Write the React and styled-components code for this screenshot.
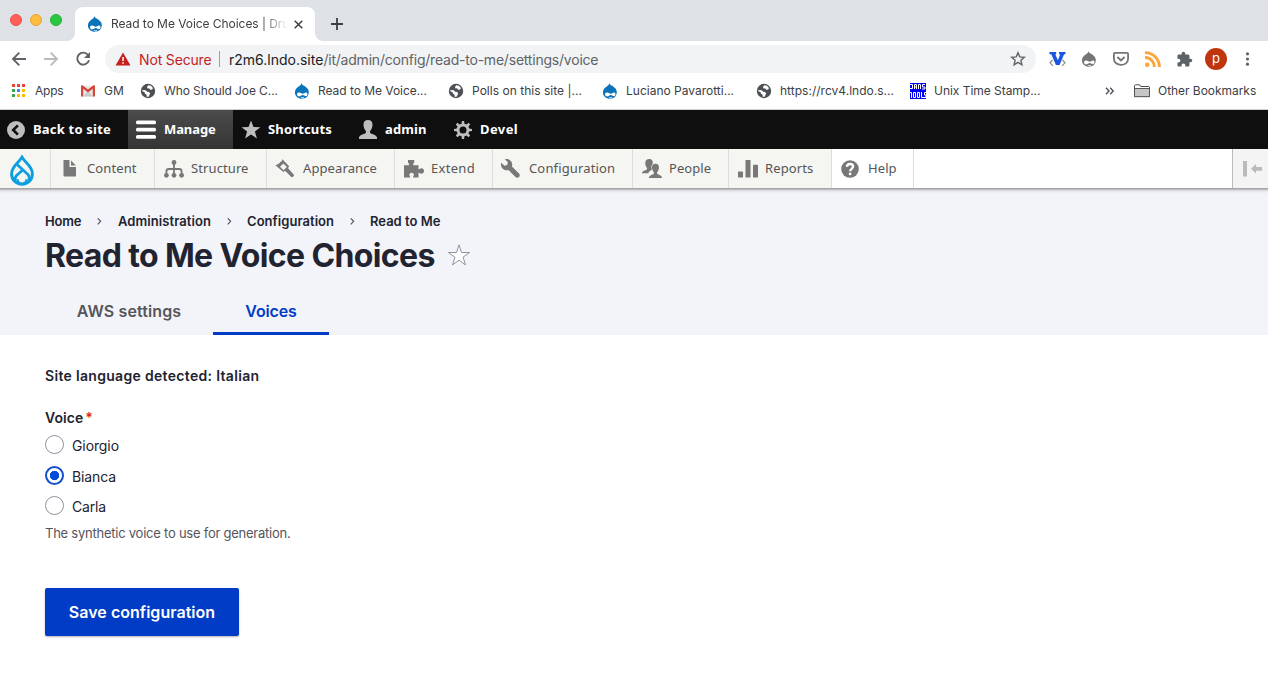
import React from "react";
import styled, { createGlobalStyle } from "styled-components";

const Global = createGlobalStyle`
  *, *::before, *::after { box-sizing: border-box; }
  html, body { margin: 0; background: #fff; overflow: hidden; }
  svg { display: block; flex: none; }
`;

const ui = `Inter, Roboto, "Liberation Sans", sans-serif`;
const humanist = `"Noto Sans", "Open Sans", "DejaVu Sans", sans-serif`;

const Page = styled.div`
  width: 1268px;
  height: 676px;
  overflow: hidden;
  font-family: ${ui};
  background: #fff;
  color: #222330;
`;

const Label = styled.span`
  letter-spacing: ${(p) => p.$ls || 0}px;
  white-space: nowrap;
`;

/* ---------- browser window ---------- */

const TabStrip = styled.div`
  height: 41px;
  background: #dee1e6;
  display: flex;
  align-items: flex-end;
`;

const Lights = styled.div`
  display: flex;
  gap: 8px;
  width: 67px;
  padding-left: 10px;
  margin-bottom: 15px;
`;

const Light = styled.span`
  width: 12px;
  height: 12px;
  border-radius: 50%;
  background: ${(p) => p.$fill};
  border: 1px solid ${(p) => p.$edge};
`;

const TabFoot = styled.span`
  width: 8px;
  height: 8px;
  background: radial-gradient(circle at ${(p) => (p.$left ? "0 0" : "100% 0")}, transparent 7.6px, #fff 8.1px);
`;

const BrowserTab = styled.div`
  width: 240px;
  height: 34px;
  border-radius: 8px 8px 0 0;
  background: #fff;
  display: flex;
  align-items: center;
  padding: 0 12px;
  font-size: 12px;
  color: #3c4043;
`;

const TabTitle = styled.div`
  width: 177px;
  margin-left: 8px;
  margin-right: 6px;
  white-space: nowrap;
  line-height: 18px;
  mask-image: linear-gradient(90deg, #000 150px, transparent 177px);
`;

const NewTab = styled.div`
  height: 34px;
  padding-left: 8px;
  display: flex;
  align-items: center;
`;

const NavRow = styled.div`
  height: 36px;
  display: flex;
  align-items: center;
  padding: 0 11px;
`;

const NavIcons = styled.div`
  display: flex;
  align-items: center;
  gap: 16px;
  width: 94px;
`;

const Omnibox = styled.div`
  width: 931px;
  height: 28px;
  border-radius: 14px;
  background: #f1f3f4;
  display: flex;
  align-items: center;
  padding: 0 10px;
  font-size: 14px;
  color: #5f6368;
`;

const NotSecure = styled.span`
  color: #c5221f;
  margin-left: 8px;
  width: 80px;
`;

const OmniRule = styled.span`
  width: 1px;
  height: 16px;
  background: #9aa0a6;
  margin-right: 9px;
`;

const Host = styled(Label)`
  color: #202124;
`;

const Address = styled.div`
  flex: 1;
  white-space: nowrap;
`;

const Extensions = styled.div`
  display: flex;
  align-items: center;
  gap: 15px;
  margin-left: 13px;
`;

const Avatar = styled.span`
  width: 22px;
  height: 22px;
  margin: 0 -3px;
  border-radius: 50%;
  background: #bf360c;
  color: #fff;
  font-size: 13px;
  line-height: 20px;
  text-align: center;
`;

const BookmarkBar = styled.div`
  height: 33px;
  padding: 0 11px 5px 11px;
  display: flex;
  align-items: center;
  border-bottom: 1px solid #dadce0;
  font-size: 12px;
  color: #3c4043;
`;

const Bookmark = styled.div`
  width: ${(p) => p.$w}px;
  flex: none;
  height: 26px;
  display: flex;
  align-items: center;
`;

const BookmarkIcon = styled.span`
  width: ${(p) => p.$w || 24}px;
  flex: none;
  display: flex;
`;

const BarRule = styled.span`
  width: 1px;
  height: 16px;
  background: #c8cacd;
  margin: 0 10px 0 9px;
`;

/* ---------- admin toolbar ---------- */

const AdminBar = styled.div`
  height: 40px;
  margin-top: -1px;
  border-top: 1px solid #cfd0d2;
  background: #0f0f0f;
  display: flex;
  font: 700 13px/18px ${humanist};
  color: #fff;
`;

const AdminItem = styled.div`
  width: ${(p) => p.$w}px;
  padding-left: ${(p) => p.$pad}px;
  display: flex;
  align-items: center;
  background: ${(p) => (p.$active ? "linear-gradient(#4c4c4c, #343434)" : "none")};
`;

const BarText = styled(Label)`
  padding-bottom: 2px;
`;

const IconSlot = styled.span`
  width: ${(p) => p.$w}px;
  flex: none;
  display: flex;
`;

const Tray = styled.div`
  height: 39px;
  background: #fff;
  display: flex;
  font: 400 13px/18px ${humanist};
  color: #565656;
  position: relative;
  box-shadow: 0 1px 0 #a5a5a8, 0 2px 1px #bcbdc1, 0 3px 3px rgba(0, 0, 0, 0.12);
`;

const TrayItem = styled.div`
  width: ${(p) => p.$w}px;
  border-right: 1px solid #ddd;
  background: ${(p) => (p.$plain ? "#fff" : "#f5f5f2")};
  padding-left: ${(p) => p.$pad}px;
  display: flex;
  align-items: center;
`;

const LogoItem = styled(TrayItem)`
  align-items: flex-end;
  padding-bottom: 2px;
`;

const Orient = styled.div`
  width: 36px;
  margin-left: auto;
  border-left: 1px solid #bbb;
  background: #f4f4f4;
  padding-left: 10px;
  display: flex;
  align-items: center;
`;

/* ---------- content ---------- */

const Header = styled.header`
  height: 147px;
  background: #f3f4f9;
  padding: 25px 45px 0;
  display: flex;
  flex-direction: column;
`;

const Breadcrumb = styled.nav`
  display: flex;
  align-items: center;
  height: 16px;
  font-size: 13px;
  font-weight: 600;
`;

const Crumb = styled.span`
  width: ${(p) => p.$w}px;
`;

const CrumbArrow = styled.span`
  width: ${(p) => p.$w}px;
  display: flex;
`;

const TitleRow = styled.div`
  display: flex;
  align-items: center;
  height: 40px;
  margin-top: 6px;
`;

const Title = styled.h1`
  margin: 0 12px 0 0;
  padding-top: 1px;
  font-size: 32px;
  line-height: 40px;
  font-weight: 700;
  letter-spacing: -0.63px;
  width: 390px;
  white-space: nowrap;
`;

const Tabs = styled.div`
  display: flex;
  margin-top: auto;
  height: 48px;
  font-size: 16px;
  font-weight: 600;
`;

const PageTab = styled.div`
  width: ${(p) => p.$w}px;
  text-align: center;
  line-height: 48px;
  color: ${(p) => (p.$active ? "#003cc5" : "#55565b")};
  box-shadow: ${(p) => (p.$active ? "inset 0 -3px 0 #003cc5" : "none")};
`;

const Form = styled.main`
  padding: 31px 45px 0;
  display: flex;
  flex-direction: column;
  align-items: flex-start;
  font-size: 14px;
`;

const Strong = styled.div`
  font-weight: 600;
  line-height: 20px;
  margin-bottom: ${(p) => p.$mb}px;
  display: flex;
`;

const Required = styled.span`
  color: #dc2323;
  margin-left: 2px;
  line-height: 20px;
  font-size: 14px;
`;

const Option = styled.label`
  display: flex;
  align-items: center;
  gap: 8px;
  height: 19px;
  margin-bottom: ${(p) => p.$mb}px;
`;

const Radio = styled.span`
  width: 19px;
  height: 19px;
  border-radius: 50%;
  border: ${(p) => (p.$on ? "2px solid #1550c8" : "1px solid #8e929c")};
  background: ${(p) => (p.$on ? "radial-gradient(circle, #004adc 4.4px, #fff 5px)" : "#fff")};
`;

const OptionText = styled(Label)`
  padding-top: 2px;
`;

const Help = styled.div`
  font-size: 13px;
  line-height: 17px;
  color: #55565b;
`;

const Save = styled.button`
  margin-top: 46px;
  width: 194px;
  height: 48px;
  border: 0;
  padding: 0;
  border-radius: 2px;
  background: #003cc5;
  color: #fff;
  font: 600 16px ${ui};
  box-shadow: 0 1px 2px rgba(0, 0, 0, 0.3);
`;

/* ---------- icons ---------- */

const Druplicon = ({ fill = "#0b73b9", size = 16 }) => (
  <svg width={size} height={size} viewBox="0 0 16 16">
    <path fill={fill} d="M7.300 0c.5 1.500 1.500 2 2.700 2.800C12.500 4.400 14.800 6 14.800 9.300 14.800 13 11.800 15.800 8 15.800S.9 13 .9 9.500c0-3.200 2-4.800 3.800-6C6.300 2.500 7.300 1.500 7.300 0z" />
    <path fill="#fff" d="M4.600 9.600c1.700-.3 2.800 1 4 1.100 1.300 0 2.400-1.700 3.900-1.200 1.400.5 1.300 3.100-.1 3.600-1.400.4-2.500-1-3.600-1-1.400 0-2.300 1.500-4 1.300-2.200-.3-2.400-3.400-.2-3.800z" />
    <path fill="none" stroke="#fff" strokeWidth="1" d="M6.800 14.300c1.100.8 2.400.7 3.300 0" />
  </svg>
);

const Globe = () => (
  <svg width="16" height="16" viewBox="0 0 16 16">
    <circle cx="8" cy="8" r="7.200" fill="#4d5156" />
    <path fill="#fff" d="M8.300 2.300c2.200.1 3.800 1.200 4.700 2.900l-1.300 1.600-1.900-.2-.6-1.400-1.700.2L7 4zM2.300 7l3.500.3 1.300 1.500 2 .3 1 1.500-1.300 2.900-2 .5-.2-2.300-1.700-1.100-.5-1.500-2.100-.9z" />
  </svg>
);

const AppsGrid = () => {
  const c = ["#ea4335", "#ea4335", "#ea4335", "#34a853", "#4285f4", "#fbbc05", "#34a853", "#fbbc05", "#fbbc05"];
  return (
    <svg width="14" height="13">
      {c.map((f, i) => <rect key={i} x={1 + (i % 3) * 5} y={Math.floor(i / 3) * 5} width="3" height="3" fill={f} />)}
    </svg>
  );
};

const Gmail = () => (
  <svg width="14" height="12" viewBox="0 0 14 12">
    <path fill="#e6e6e6" d="M1 1h12v10.500H1z" />
    <path fill="#c9c9c9" d="M2 11.500l5-5 5 5z" />
    <path fill="#d54539" d="M0 1.500C0 .5 1.100 0 1.900.6L7 4.600 12.100.6C12.900 0 14 .5 14 1.500v10h-2.200V3.700L7 7.600 2.200 3.700v7.800H0z" />
  </svg>
);

const DansTools = () => (
  <svg width="16" height="16" viewBox="0 0 16 16">
    <path fill="#0000f5" d="M0 0h16v16H0z" />
    <path fill="none" stroke="#fff" d="M0 1.500h2.500v4H0M4.500 6V1.500h2V6M4 4h3M8.500 6V1.500h2V6M15 1.500h-2.500V4H15v2h-3M0 9.500h1.500V15M3.500 9.500h2v5h-2zM7.500 9.500h2v5h-2zM11.500 9v5.500H14M16 9.500h-1.500V12H16v2.500h-2" />
  </svg>
);

const Folder = () => (
  <svg width="16" height="14" viewBox="0 0 16 14">
    <path fill="#fff" stroke="#4d4d4d" d="M.5 12.500V1.500l.7-.7h4.500l1 1.700h8.100l.7.7v9.300z" />
    <path fill="#c6c6c6" stroke="#4d4d4d" strokeWidth=".9" d="M.5 4.500h15v8.200H.5z" />
  </svg>
);

const Back = ({ color, flip }) => (
  <svg width="16" height="16" viewBox="0 0 16 16" fill="none" stroke={color} strokeWidth="1.900">
    <path d={flip ? "M1 8h13M7.700 1.600L14 8l-6.300 6.400" : "M15 8H2M8.300 1.600L2 8l6.300 6.400"} />
  </svg>
);

const Reload = () => (
  <svg width="16" height="16" viewBox="0 0 16 16">
    <path fill="none" stroke="#5f6368" strokeWidth="1.900" d="M13.300 4.400A6 6 0 1 0 14 9.300" />
    <path fill="#5f6368" d="M15 1v6H9z" />
  </svg>
);

const barFill = "#bebebe";
const AdminIcon = {
  back: (
    <svg width="18" height="18" viewBox="0 0 18 18">
      <circle cx="9" cy="9" r="9" fill={barFill} />
      <path d="M10.900 4.400L6.200 9l4.700 4.600" fill="none" stroke="#0f0f0f" strokeWidth="2.600" />
    </svg>
  ),
  menu: (
    <svg width="20" height="20" viewBox="0 0 20 20" fill="#fff">
      <rect y=".5" width="20" height="3.700" rx="1.500" />
      <rect y="7.800" width="20" height="3.600" rx="1.500" />
      <rect y="15" width="20" height="3.700" rx="1.500" />
    </svg>
  ),
  star: (
    <svg width="20" height="20" viewBox="0 0 20 20">
      <path fill={barFill} d="M10 .4l2.500 6.600 6.900.2-5.500 4.300 2 6.900L10 14.400l-5.900 4 2-6.900L.6 7.200l6.900-.2z" />
    </svg>
  ),
  user: (
    <svg width="18" height="20" viewBox="0 0 18 20">
      <path fill={barFill} d="M9 0c3 0 4.600 1.900 4.500 4.800-.1 2.700-1 4.700-2.200 6-.4.500-.4 2 .2 2.400 1.500 1 6.200 1.600 6.500 4.400v1.400H0v-1.400c.3-2.800 5-3.400 6.500-4.400.6-.4.600-1.900.2-2.400-1.200-1.300-2.100-3.300-2.200-6C4.400 1.900 6 0 9 0z" />
    </svg>
  ),
  gear: (
    <svg width="18" height="18" viewBox="0 0 18 18">
      <circle cx="9" cy="9" r="5" fill="none" stroke={barFill} strokeWidth="2.900" />
      {[0, 45, 90, 135, 180, 225, 270, 315].map((a) => (
        <path key={a} fill={barFill} d="M7.500 3.500L7.900 0h2.200l.4 3.500z" transform={`rotate(${a} 9 9)`} />
      ))}
    </svg>
  ),
};

const trayFill = "#787878";
const TrayIcon = {
  content: (
    <svg width="14" height="17" viewBox="0 0 14 17" fill={trayFill}>
      <path d="M.5 0h6v7H13v8.500c0 .6-.4 1-1 1H1.300c-.5 0-.8-.4-.8-1zM8 .6L13 5.600H8z" />
    </svg>
  ),
  structure: (
    <svg width="20" height="18" viewBox="0 0 20 18" fill={trayFill}>
      <circle cx="10" cy="2.500" r="2.400" />
      <circle cx="2.400" cy="15.300" r="2.400" />
      <circle cx="10" cy="15.300" r="2.400" />
      <circle cx="17.600" cy="15.300" r="2.400" />
      <path fill="none" stroke={trayFill} strokeWidth="1.800" d="M10 3v12M2.400 15v-3.500c0-1.600.8-2.500 2.400-2.500h10.400c1.600 0 2.400.9 2.400 2.500V15" />
    </svg>
  ),
  appearance: (
    <svg width="19" height="19" viewBox="0 0 19 19" fill={trayFill}>
      <path fillRule="evenodd" d="M7.300.3l6.400 6.500c.5.600.4 1-.1 1.500l-.7.700L19 16c.5.600-1.600 2.700-2.300 2.200l-6.700-6.500-.8.800c-.5.400-.9.500-1.400 0L.4 6.300 1.300 5.700 2 6 2.600 5l.8.300.6-1.300.8.3.5-1.500 1 .3zM8.300 4.400L5 7.800l3.500 3.500 3.400-3.400z" />
    </svg>
  ),
  extend: (
    <svg width="20" height="18" viewBox="0 0 20 18" fill={trayFill}>
      <path d="M4 0h6.200v3H9.300v2.200h5.200v4c1 .4 1.500-.9 2.800-.9 3.600 0 3.600 5.400 0 5.400-1.300 0-1.800-1.300-2.800-.9v4.700H9.200c-.3-1 .7-1.400.7-2.700 0-2.700-4.500-2.700-4.500 0 0 1.300 1 1.700.7 2.700H0V5.200h4.900V3H4z" />
    </svg>
  ),
  configuration: (
    <svg width="20" height="20" viewBox="0 0 16 16" fill={trayFill}>
      <path d="M14.416 11.586l-5.667-5.667c.15-.449.252-.921.252-1.419 0-2.485-2.016-4.500-4.502-4.500-.505 0-.981.102-1.434.255l2.431 2.431-.588 2.196-2.196.588-2.445-2.445c-.162.464-.268.956-.268 1.475 0 2.486 2.014 4.500 4.500 4.500.5 0 .972-.102 1.421-.251l5.667 5.665c.781.781 2.047.781 2.828 0s.781-2.047 0-2.828z" />
    </svg>
  ),
  people: (
    <svg width="20" height="20" viewBox="0 0 20 20" fill={trayFill}>
      <path d="M7.200 0c3 0 4 2.300 3.400 5-1.400 1.300-1.500 3.600-.6 5.600-1.300 1-2.800 1.600-3.700 3.600H0c.1-2.400 3.500-2.900 4.800-3.800.5-.6.200-1.300-.1-1.900C3.700 7.300 3.200 5.600 3.300 4 3.400 1.500 4.800 0 7.200 0z" />
      <path d="M13.500 4.700c2.500 0 3.600 1.600 3.500 3.800-.1 1.900-.8 3.500-1.700 4.600-.4.600-.3 1.500.1 1.900 1.200.9 4.500 1.300 4.600 3.900H7c.1-2.600 3.400-3 4.600-3.900.4-.4.500-1.300.1-1.900-.9-1.100-1.600-2.700-1.700-4.600-.1-2.200 1-3.800 3.500-3.800z" />
    </svg>
  ),
  reports: (
    <svg width="20" height="18" viewBox="0 0 20 18" fill={trayFill}>
      <rect x="0" y="11.500" width="5" height="6" rx=".6" />
      <rect x="7.500" y="0" width="5" height="17.500" rx=".6" />
      <rect x="15" y="4.800" width="5" height="12.700" rx=".6" />
    </svg>
  ),
  help: (
    <svg width="18" height="18" viewBox="0 0 18 18">
      <circle cx="9" cy="9" r="8.800" fill={trayFill} />
      <path fill="none" stroke="#fff" strokeWidth="2.400" d="M5.900 6.700C6 4.900 7.200 4 9 4s3.100 1 3.100 2.600C12.100 8.800 9.100 8.900 9.100 11.300" />
      <circle cx="9.100" cy="13.900" r="1.350" fill="#fff" />
    </svg>
  ),
};

const DrupalLogo = () => (
  <svg width="24" height="31" viewBox="0 0 24 31" fill="none" stroke="#0c9fdf" strokeWidth="2.900">
    <path d="M12 2.200C9.200 7.600 1.600 10.800 1.600 18.900a10.400 10.400 0 0 0 20.800 0C22.400 10.800 14.800 7.600 12 2.200z" />
    <path d="M7.300 9.700l10.400 9.600c1.700 1.800 1.900 4.200.7 6.600M12.700 15l-6.400 5.800c-1.200 1.500-1.500 3-.7 5.100" strokeWidth="2.700" />
    <path d="M7.600 24.200c0 6 8.800 6 8.800 0" strokeWidth="2.200" />
  </svg>
);

const adminItems = [
  ["back", "Back to site", 128, 7, 26, 0.2],
  ["menu", "Manage", 105, 8, 28, -0.1],
  ["star", "Shortcuts", 118, 8, 27, 0.16],
  ["user", "admin", 95, 8, 26, 0.109],
  ["gear", "Devel", 100, 8, 26, 0.4],
];

const trayItems = [
  ["content", "Content", 104, 12, 24, 0.1],
  ["structure", "Structure", 112, 9, 27, 0.1],
  ["appearance", "Appearance", 128, 8, 28, 0.1],
  ["extend", "Extend", 98, 9, 27, 0.3],
  ["configuration", "Configuration", 140, 8, 28, 0.15],
  ["people", "People", 96, 9, 27, 0.05],
  ["reports", "Reports", 103, 9, 27, 0.12],
  ["help", "Help", 82, 9, 27, 0.1],
];

const bookmarks = [
  [<AppsGrid />, "Apps", 70, 24, -0.2],
  [<Gmail />, "GM", 59, 23, 0.047],
  [<Globe />, "Who Should Joe C...", 154, 24, -0.1],
  [<Druplicon />, "Read to Me Voice...", 154, 24, -0.042],
  [<Globe />, "Polls on this site |...", 154, 24, 0.026],
  [<Druplicon />, "Luciano Pavarotti...", 154, 24, 0],
  [<Globe />, "https://rcv4.lndo.s...", 154, 24, 0.016],
  [<DansTools />, "Unix Time Stamp...", 195, 24, -0.034],
];

const Chevron = ({ w }) => (
  <CrumbArrow $w={w}>
    <svg width="5" height="8" viewBox="0 0 5 8" fill="none" stroke="#545560" strokeWidth="1.200">
      <path d="M.8 1.300L3.600 4.300 .8 7.300" />
    </svg>
  </CrumbArrow>
);

export default function App() {
  return (
    <Page>
      <Global />
      <TabStrip>
        <Lights>
          <Light $fill="#ff5f57" $edge="#e9514a" />
          <Light $fill="#febc40" $edge="#e5a634" />
          <Light $fill="#2ac840" $edge="#24b038" />
        </Lights>
        <TabFoot $left />
        <BrowserTab>
          <Druplicon />
          <TabTitle><Label $ls={-0.05}>Read to Me Voice Choices | Dru</Label></TabTitle>
          <svg width="9" height="9" viewBox="0 0 9 9" stroke="#3c4043" strokeWidth="1.500"><path d="M.7.7l7.600 7.600M8.300.7L.7 8.300" /></svg>
        </BrowserTab>
        <TabFoot />
        <NewTab>
          <svg width="12" height="12" viewBox="0 0 12 12" stroke="#3c4043" strokeWidth="1.800"><path d="M6 0v12M0 6h12" /></svg>
        </NewTab>
      </TabStrip>

      <NavRow>
        <NavIcons>
          <Back color="#5f6368" />
          <Back color="#babcbe" flip />
          <Reload />
        </NavIcons>
        <Omnibox>
          <svg width="16" height="14" viewBox="0 0 16 14">
            <path fill="#c5221f" d="M8 .5l7.500 13H.5z" />
            <path fill="#fff" d="M7.300 5h1.500v4H7.300zM7.300 10.200h1.500v1.500H7.300z" />
          </svg>
          <NotSecure><Label $ls={-0.158}>Not Secure</Label></NotSecure>
          <OmniRule />
          <Address>
            <Host>r2m6.lndo.site</Host>
            <Label $ls={-0.213}>/it/admin/config/read-to-me/settings/voice</Label>
          </Address>
          <svg width="16" height="16" viewBox="0 0 16 16" fill="none" stroke="#5f6368" strokeWidth="1.400">
            <path d="M8 1.700l1.800 4.200 4.500.4-3.400 3 1 4.500L8 11.400l-3.900 2.400 1-4.500-3.400-3 4.500-.4z" />
          </svg>
        </Omnibox>
        <Extensions>
          <svg width="17" height="16" viewBox="0 0 17 16">
            <path fill="none" stroke="#8a8a8a" strokeWidth="1.200" d="M3.500 9L1 11.800 4 14.800M13.500 9l2.500 2.800-3 3" />
            <path fill="#1a56e0" d="M.5 1h6.700v2.300H6.300L8.900 9.300l2.300-6H10V1h6.500v2.300h-1.400L10.600 14H6.900L2.300 3.300H.5z" />
          </svg>
          <Druplicon fill="#757575" />
          <svg width="18" height="16" viewBox="0 0 18 16" fill="none" stroke="#757575" strokeWidth="1.800">
            <path d="M3 1.900h12c.7 0 1.100.4 1.100 1.100v4.500c0 8.500-14.200 8.500-14.200 0V3c0-.7.400-1.100 1.100-1.100z" />
            <path d="M5.400 6L9 9.500 12.600 6" />
          </svg>
          <svg width="16" height="16" viewBox="0 0 16 16" fill="none" stroke="#fba53a" strokeWidth="2.900">
            <path d="M0 6.500A9.300 9.300 0 0 1 9.300 16M0 1.600A14.300 14.300 0 0 1 14.400 16" />
            <circle cx="2.200" cy="13.700" r="2.200" fill="#fba53a" stroke="none" />
          </svg>
          <svg width="17" height="17" viewBox="0 0 24 24" fill="#5f6368">
            <path d="M20.500 11H19V7c0-1.100-.9-2-2-2h-4V3.500a2.500 2.500 0 0 0-5 0V5H4c-1.100 0-2 .9-2 2v3.800h1.500c1.500 0 2.700 1.200 2.700 2.700S5 16.200 3.500 16.200H2V20c0 1.100.9 2 2 2h3.800v-1.500c0-1.500 1.200-2.700 2.700-2.700s2.700 1.200 2.700 2.700V22H17c1.100 0 2-.9 2-2v-4h1.500a2.500 2.500 0 0 0 0-5z" />
          </svg>
          <Avatar>p</Avatar>
          <svg width="16" height="16" viewBox="0 0 16 16" fill="#5f6368"><circle cx="8.500" cy="2.800" r="1.600" /><circle cx="8.500" cy="8" r="1.600" /><circle cx="8.500" cy="13.200" r="1.600" /></svg>
        </Extensions>
      </NavRow>

      <BookmarkBar>
        {bookmarks.map(([icon, text, w, slot, ls], i) => (
          <Bookmark key={i} $w={w}>
            <BookmarkIcon $w={slot}>{icon}</BookmarkIcon>
            <Label $ls={ls}>{text}</Label>
          </Bookmark>
        ))}
        <svg width="10" height="8" viewBox="0 0 10 8" fill="none" stroke="#4d5156" strokeWidth="1.400"><path d="M1 .8L4 4 1 7.200M5.200.8l3 3.200-3 3.200" /></svg>
        <BarRule />
        <Bookmark $w={124}>
          <BookmarkIcon><Folder /></BookmarkIcon>
          <Label $ls={-0.04}>Other Bookmarks</Label>
        </Bookmark>
      </BookmarkBar>

      <AdminBar>
        {adminItems.map(([icon, text, w, pad, slot, ls]) => (
          <AdminItem key={icon} $w={w} $pad={pad} $active={icon === "menu"}>
            <IconSlot $w={slot}>{AdminIcon[icon]}</IconSlot>
            <BarText $ls={ls}>{text}</BarText>
          </AdminItem>
        ))}
      </AdminBar>

      <Tray>
        <LogoItem $w={51} $pad={10}><DrupalLogo /></LogoItem>
        {trayItems.map(([icon, text, w, pad, slot, ls]) => (
          <TrayItem key={icon} $w={w} $pad={pad} $plain={icon === "help"}>
            <IconSlot $w={slot}>{TrayIcon[icon]}</IconSlot>
            <BarText $ls={ls}>{text}</BarText>
          </TrayItem>
        ))}
        <Orient>
          <svg width="20" height="16" viewBox="0 0 20 16" fill="#bababa"><path d="M0 0h4v15.500H0zM8 7.800L13 3v3h6v3.800h-6v2.800z" /></svg>
        </Orient>
      </Tray>

      <Header>
        <Breadcrumb>
          <Crumb $w={52}><Label $ls={-0.2}>Home</Label></Crumb><Chevron w={21} />
          <Crumb $w={109}><Label $ls={0.07}>Administration</Label></Crumb><Chevron w={20} />
          <Crumb $w={103}><Label $ls={0.05}>Configuration</Label></Crumb><Chevron w={20} />
          <Label $ls={0}>Read to Me</Label>
        </Breadcrumb>
        <TitleRow>
          <Title>Read to Me Voice Choices</Title>
          <svg width="24" height="24" viewBox="0 0 24 24" fill="#fff" stroke="#92939b" strokeWidth="1">
            <path d="M12 1.800l2.500 7.700h8.100L16 14.200l2.500 7.700L12 17.200l-6.500 4.700L8 14.200 1.400 9.500h8.100z" />
          </svg>
        </TitleRow>
        <Tabs>
          <PageTab $w={168}><Label $ls={0.1}>AWS settings</Label></PageTab>
          <PageTab $w={116} $active><Label $ls={-0.15}>Voices</Label></PageTab>
        </Tabs>
      </Header>

      <Form>
        <Strong $mb={22}><Label $ls={0.312}>Site language detected: Italian</Label></Strong>
        <Strong $mb={7}><Label $ls={0.069}>Voice</Label><Required>*</Required></Strong>
        <Option $mb={12}><Radio /><OptionText $ls={-0.1}>Giorgio</OptionText></Option>
        <Option $mb={11}><Radio $on /><OptionText $ls={-0.1}>Bianca</OptionText></Option>
        <Option $mb={10}><Radio /><OptionText $ls={-0.2}>Carla</OptionText></Option>
        <Help><Label $ls={-0.24}>The synthetic voice to use for generation.</Label></Help>
        <Save><Label $ls={0.027}>Save configuration</Label></Save>
      </Form>
    </Page>
  );
}
